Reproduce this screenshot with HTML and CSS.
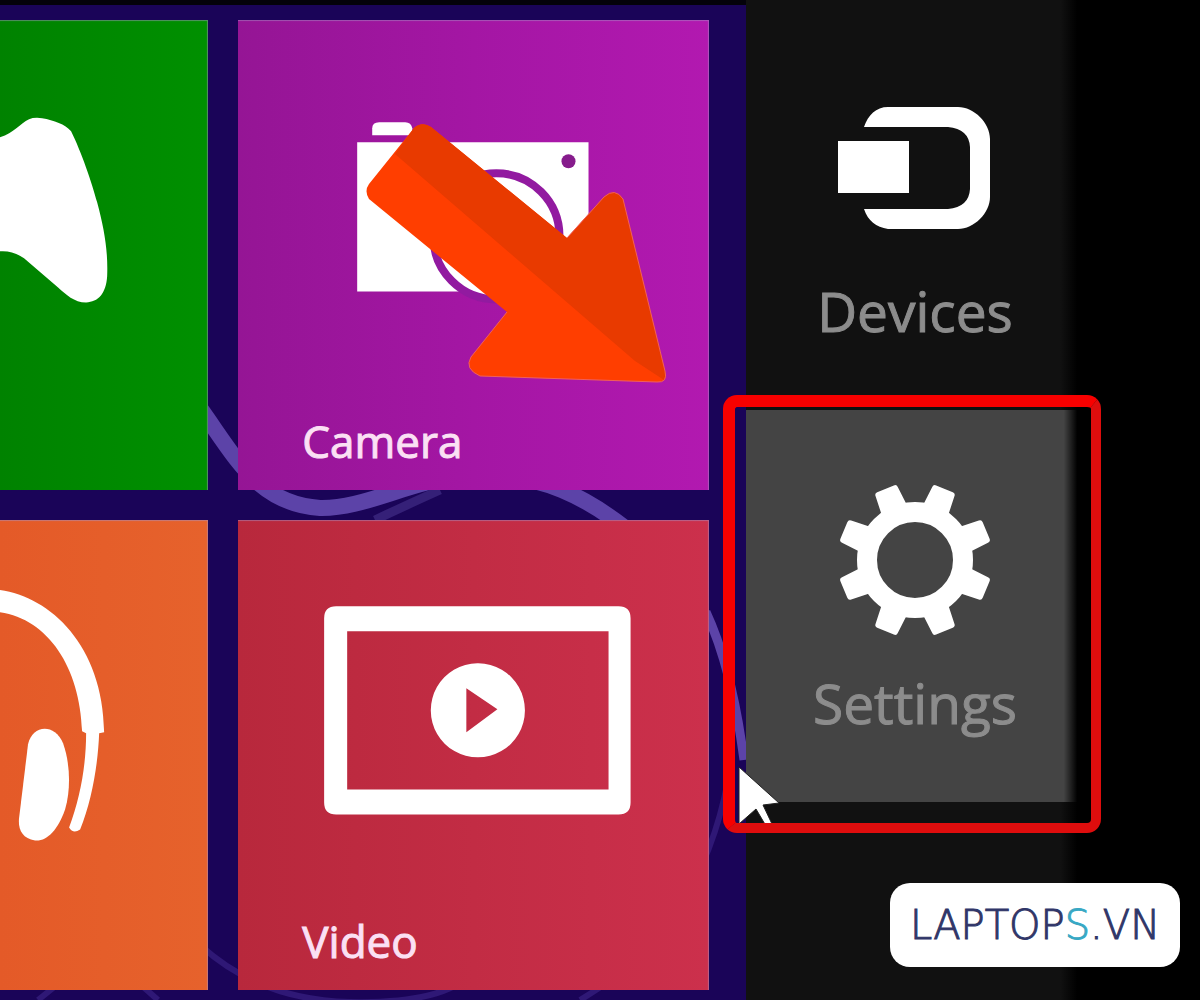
FILE: index.html
```html
<!DOCTYPE html>
<html lang="en">
<head>
    <meta charset="UTF-8">
    <meta name="viewport" content="width=device-width, initial-scale=1.0">
    <title>Start Screen - Settings Charm</title>
    <link rel="stylesheet" href="styles.css">
</head>
<body>
    <div class="screen">
        <main class="start">
            <!-- Wallpaper swirls -->
            <svg class="wallpaper" viewBox="0 0 746 1000" preserveAspectRatio="none" aria-hidden="true">
                <path d="M200 408C236 458 258 504 320 508C365 509 410 480 466 476C540 470 590 498 640 540" fill="none" stroke="#5c43a8" stroke-width="16"/>
                <path d="M706 612Q732 668 744 760" fill="none" stroke="#5c43a8" stroke-width="9"/>
                <path d="M375 520Q400 508 440 490" fill="none" stroke="#352078" stroke-width="9"/>
                <path d="M200 945Q260 1000 350 1002T470 975M580 1000Q700 930 728 780M38 1000L58 984M140 984L158 1000" fill="none" stroke="#2f1876" stroke-width="6"/>
            </svg>

            <div class="tiles">
                <button class="tile tile-games" aria-label="Games">
                    <svg class="tile-art" viewBox="0 0 208 340" aria-hidden="true">
                        <path d="M0 117C14 113 20 103 29 99Q34 97 42 98C54 100 65 104 71 111C81 131 92 163 97 182C104 208 108 230 107 256C106 273 98 282 86 282C74 282 66 274 58 267L24 238Q13 230 0 231Z" fill="#fff"/>
                    </svg>
                </button>

                <button class="tile tile-camera">
                    <svg class="tile-art" viewBox="0 0 470 340" aria-hidden="true">
                        <path d="M134 115V108Q134 102 141 102H167Q173 102 174 108V115Z" fill="#fff"/>
                        <path d="M119 122H350V271H119Z" fill="#fff"/>
                        <circle cx="330" cy="141" r="7" fill="#861c8c"/>
                        <circle cx="258" cy="216" r="63" fill="#fff" stroke="#921aa0" stroke-width="8"/>
                    </svg>
                    <span class="tile-label">Camera</span>
                    <!-- Arrow pointing to the settings charm -->
                    <svg class="arrow" viewBox="0 0 302 262" aria-hidden="true">
                        <path d="M49 5Q57 -2 66 4L202 115L239 74Q250 64 258 76L300 248Q303 260 292 259L115 253Q99 246 106 234L142 189L4 76Q-1 68 4 61Z" fill="#ff3e00"/>
                        <path d="M30 31L49 5Q57 -2 66 4L202 115L239 74Q250 64 258 76L300 248Q301 254 299 257L270 238Z" fill="#e83a00"/>
                        <path d="M202 115L239 74Q250 64 258 76L300 248Q303 260 292 259L115 253Q99 246 106 234L142 189" fill="none" stroke="#f0605c" stroke-width="1"/>
                    </svg>
                </button>

                <button class="tile tile-music" aria-label="Music">
                    <svg class="tile-art" viewBox="0 0 208 340" aria-hidden="true">
                        <path d="M0 70C50 77 103 125 104 212L99 213C98 242 92 280 80 309Q73 314 69 307C80 278 86 245 86 213L82 211C80 147 48 99 0 92Z" fill="#fff"/>
                        <path d="M28 224C32 205 54 202 63 223C70 243 71 268 65 289C58 309 47 321 35 320C22 318 18 309 19 298Z" fill="#fff"/>
                    </svg>
                </button>

                <button class="tile tile-video">
                    <svg class="tile-art" viewBox="0 0 470 340" aria-hidden="true">
                        <path fill-rule="evenodd" d="M98 86H380Q392 86 392 98V282Q392 294 380 294H98Q86 294 86 282V98Q86 86 98 86ZM109 111V269H370V111Z" fill="#fff"/>
                        <path fill-rule="evenodd" d="M240 143A47 47 0 1 1 239 143ZM228 168V212L259 189Z" fill="#fff"/>
                    </svg>
                    <span class="tile-label">Video</span>
                </button>
            </div>
        </main>

        <nav class="charms" aria-label="Charms">
            <button class="charm">
                <svg class="charm-icon" viewBox="0 0 154 154" aria-hidden="true">
                    <path d="M0 50H71V102H0ZM26 36C30 24 38 16 50 16H120C136 16 152 32 152 48V106C152 122 136 138 120 138H50C38 136 30 130 26 118H110Q131 116 132 98V56Q131 38 110 36Z" fill="#fff"/>
                </svg>
                <span class="charm-label">Devices</span>
            </button>

            <button class="charm charm-active">
                <svg class="charm-icon" viewBox="-77 -77 154 154" aria-hidden="true">
                    <defs>
                        <path id="tooth" d="M-12 -74Q-12 -77 -9 -77H9Q12 -77 12 -74L14 -48H-14Z"/>
                    </defs>
                    <g fill="#fff">
                        <use href="#tooth" transform="rotate(22.5)"/>
                        <use href="#tooth" transform="rotate(67.5)"/>
                        <use href="#tooth" transform="rotate(112.5)"/>
                        <use href="#tooth" transform="rotate(157.5)"/>
                        <use href="#tooth" transform="rotate(202.5)"/>
                        <use href="#tooth" transform="rotate(247.5)"/>
                        <use href="#tooth" transform="rotate(292.5)"/>
                        <use href="#tooth" transform="rotate(337.5)"/>
                    </g>
                    <circle r="48" fill="none" stroke="#fff" stroke-width="20"/>
                </svg>
                <span class="charm-label">Settings</span>
                <svg class="cursor" viewBox="0 0 42 60" aria-hidden="true">
                    <path d="M1 1L41 37L25 39L34 58L28 60L18 43L1 58Z" fill="#fff" stroke="#222" stroke-width="1"/>
                </svg>
                <span class="highlight"></span>
            </button>
        </nav>

        <a class="brand" href="#">LAPTOP<span class="brand-accent">S</span>.VN</a>
    </div>
</body>
</html>
```
FILE: styles.css
```css
:root {
    --wallpaper: #1a0458;
    --charm-bg: #111111;
    --charm-active: #444444;
    --charm-text: #8c8c8c;
    --tile-edge: rgba(170, 150, 200, 0.5);
    --highlight: #f80000;
    --highlight-dark: #de0d0d;
    --brand: #303668;
    --brand-accent: #38a8c4;
}

* {
    margin: 0;
    padding: 0;
    box-sizing: border-box;
}

body {
    background-color: #000;
    font-family: "Open Sans", "Noto Sans", sans-serif;
}

button {
    border: none;
    font-family: inherit;
    cursor: pointer;
}

.screen {
    position: relative;
    display: grid;
    grid-template-columns: 746fr 338fr 116fr;
    min-height: 100vh;
    overflow: hidden;
}

/* Start screen */
.start {
    position: relative;
    display: flex;
    background-color: var(--wallpaper);
    border-top: 5px solid #04020a;
}

.wallpaper {
    position: absolute;
    top: -5px;
    left: 0;
    width: 100%;
    height: calc(100% + 5px);
}

.tiles {
    position: relative;
    flex: 1;
    display: grid;
    grid-template-columns: 208fr 470fr;
    grid-template-rows: 1fr 1fr;
    gap: 30px;
    padding: 15px 37px 10px 0;
}

.tile {
    position: relative;
    display: flex;
    flex-direction: column;
    justify-content: space-between;
    align-items: flex-start;
    padding-bottom: 21px;
    box-shadow: inset -1px 1px 1px var(--tile-edge);
    color: #fff;
}

.tile-games {
    background: linear-gradient(90deg, #008200, #009000);
}

.tile-camera {
    background: linear-gradient(90deg, #951595, #a416a4 50%, #b219b0);
}

.tile-music {
    background: linear-gradient(90deg, #e45a28, #e6622c);
}

.tile-video {
    background: linear-gradient(90deg, #b8283c, #cc304c);
}

.tile-art {
    display: block;
    width: 100%;
}

.tile-label {
    padding-left: 64px;
    font-size: 44px;
    line-height: 56px;
    color: #fbe0f4;
    -webkit-text-stroke: 1px currentColor;
}

.arrow {
    position: absolute;
    top: 103px;
    left: 127px;
    width: 302px;
}

/* Charms bar */
.charms {
    background: linear-gradient(90deg, var(--charm-bg) 93%, #000 98%);
    padding-top: 18px;
}

.charm {
    position: relative;
    display: flex;
    flex-direction: column;
    align-items: center;
    gap: 34px;
    width: 100%;
    height: 392px;
    padding-top: 73px;
    background: none;
    color: var(--charm-text);
}

.charm-active {
    background: linear-gradient(90deg, var(--charm-active) 94%, #000 98%);
}

.charm-icon {
    width: 154px;
    height: 154px;
}

.charm-label {
    font-size: 55px;
    line-height: 64px;
    -webkit-text-stroke: 1px currentColor;
}

.highlight {
    position: absolute;
    top: -15px;
    right: -17px;
    bottom: -31px;
    left: -23px;
    border: 12px solid var(--highlight);
    border-right: 10px solid var(--highlight-dark);
    border-bottom: 10px solid var(--highlight-dark);
    border-radius: 14px;
}

.cursor {
    position: absolute;
    bottom: -24px;
    left: -8px;
    width: 42px;
    height: 60px;
}

/* Site badge */
.brand {
    position: absolute;
    right: 20px;
    bottom: 33px;
    display: flex;
    justify-content: center;
    align-items: center;
    width: 290px;
    height: 84px;
    border-radius: 20px;
    background-color: #fff;
    color: var(--brand);
    font-family: "DejaVu Sans", sans-serif;
    font-size: 40px;
    font-weight: 200;
    text-decoration: none;
    -webkit-text-stroke: 1px currentColor;
}

.brand-accent {
    color: var(--brand-accent);
}
```
